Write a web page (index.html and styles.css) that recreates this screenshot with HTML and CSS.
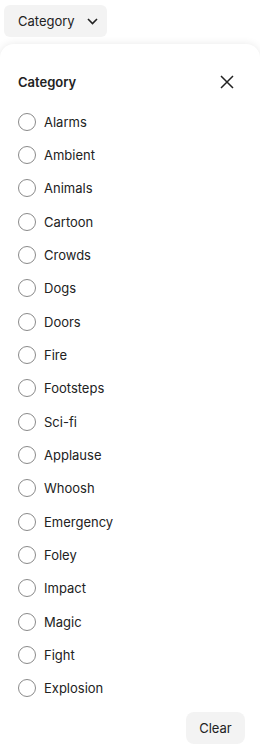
FILE: index.html
```html
<!DOCTYPE html>
<html>
<head>
<meta charset="utf-8">
<link rel="stylesheet" href="styles.css">
</head>
<body>
<div class="page">
  <button class="trigger">Category
    <svg class="chev" width="11" height="7" viewBox="0 0 11 7"><path d="M1 1l4.5 4.5L10 1" fill="none" stroke="#222" stroke-width="1.6"/></svg>
  </button>
  <div class="panel">
    <div class="header">
      <span class="title">Category</span>
      <svg class="close" width="14" height="14" viewBox="0 0 14 14"><path d="M1 1l12 12M13 1L1 13" stroke="#222" stroke-width="1.5" fill="none"/></svg>
    </div>
    <ul class="list">
      <li class="row"><span class="radio"></span>Alarms</li>
      <li class="row"><span class="radio"></span>Ambient</li>
      <li class="row"><span class="radio"></span>Animals</li>
      <li class="row"><span class="radio"></span>Cartoon</li>
      <li class="row"><span class="radio"></span>Crowds</li>
      <li class="row"><span class="radio"></span>Dogs</li>
      <li class="row"><span class="radio"></span>Doors</li>
      <li class="row"><span class="radio"></span>Fire</li>
      <li class="row"><span class="radio"></span>Footsteps</li>
      <li class="row"><span class="radio"></span>Sci-fi</li>
      <li class="row"><span class="radio"></span>Applause</li>
      <li class="row"><span class="radio"></span>Whoosh</li>
      <li class="row"><span class="radio"></span>Emergency</li>
      <li class="row"><span class="radio"></span>Foley</li>
      <li class="row"><span class="radio"></span>Impact</li>
      <li class="row"><span class="radio"></span>Magic</li>
      <li class="row"><span class="radio"></span>Fight</li>
      <li class="row"><span class="radio"></span>Explosion</li>
    </ul>
    <div class="footer">
      <button class="clear">Clear</button>
    </div>
  </div>
</div>
</body>
</html>
```

FILE: styles.css
```css
* { box-sizing: border-box; }
html, body { margin: 0; padding: 0; background: #fff; }
body { font-family: Inter, "Noto Sans", sans-serif; color: #222; font-size: 13px; overflow: hidden; }
.page { padding-top: 5px; }
.trigger {
  margin-left: 4px;
  height: 32px;
  width: 103px;
  padding: 0 0 0 14px;
  border: none;
  border-radius: 6px;
  background: #f3f3f3;
  font: inherit;
  font-size: 13px;
  color: #222;
  display: flex;
  align-items: center;
  gap: 12px;
}
.chev { display: block; }
.panel {
  margin-top: 7px;
  width: 260px;
  border-radius: 14px 14px 0 0;
  background: #fff;
  box-shadow: 0 0 8px rgba(0,0,0,0.09);
  padding: 24px 15px 12px 18px;
  height: 730px;
}
.header {
  height: 28px;
  display: flex;
  align-items: center;
  justify-content: space-between;
  padding-right: 11px;
}
.title { font-weight: 600; font-size: 13px; }
.close { display: block; }
.list { list-style: none; margin: 9px 0 0; padding: 0; }
.row {
  height: 33.333px;
  display: flex;
  align-items: center;
  gap: 8px;
  font-size: 13px;
}
.radio {
  width: 18px;
  height: 18px;
  border: 1px solid #8a8a8a;
  border-radius: 50%;
  flex: none;
}
.footer { display: flex; justify-content: flex-end; margin-top: 7px; }
.clear {
  width: 59px;
  height: 32px;
  border: none;
  border-radius: 8px;
  background: #f3f3f3;
  font: inherit;
  font-size: 13px;
  color: #222;
}
```
